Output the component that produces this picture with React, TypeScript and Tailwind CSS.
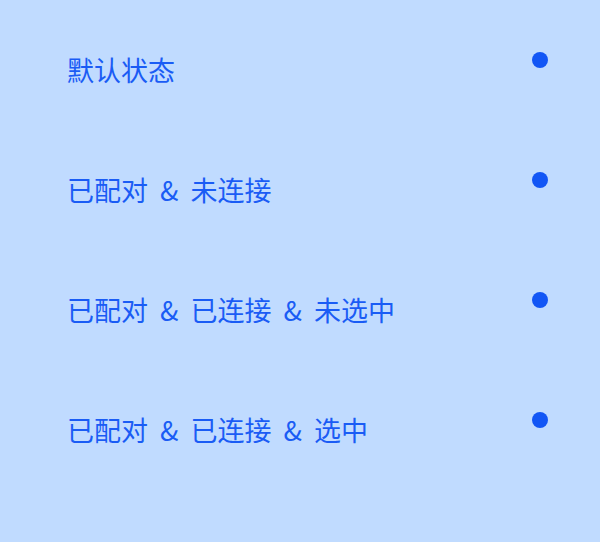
const rows = [
  "默认状态",
  "已配对 & 未连接",
  "已配对 & 已连接 & 未选中",
  "已配对 & 已连接 & 选中",
];

export default function App() {
  return (
    <div
      className="w-[600px] h-[542px] bg-[#c0dbff]"
      style={{ fontFamily: '"Noto Sans CJK SC", "Noto Sans", sans-serif' }}
    >
      {rows.map((label) => (
        <div key={label} className="h-[120px] flex items-start justify-between pl-[67px] pr-[52px]">
          <span className="mt-[50px] text-[27px] leading-[40px] [word-spacing:6px] text-[#1a5cf5]">
            {label}
          </span>
          <span className="mt-[52px] w-4 h-4 rounded-full bg-[#1256f5]" />
        </div>
      ))}
    </div>
  );
}
